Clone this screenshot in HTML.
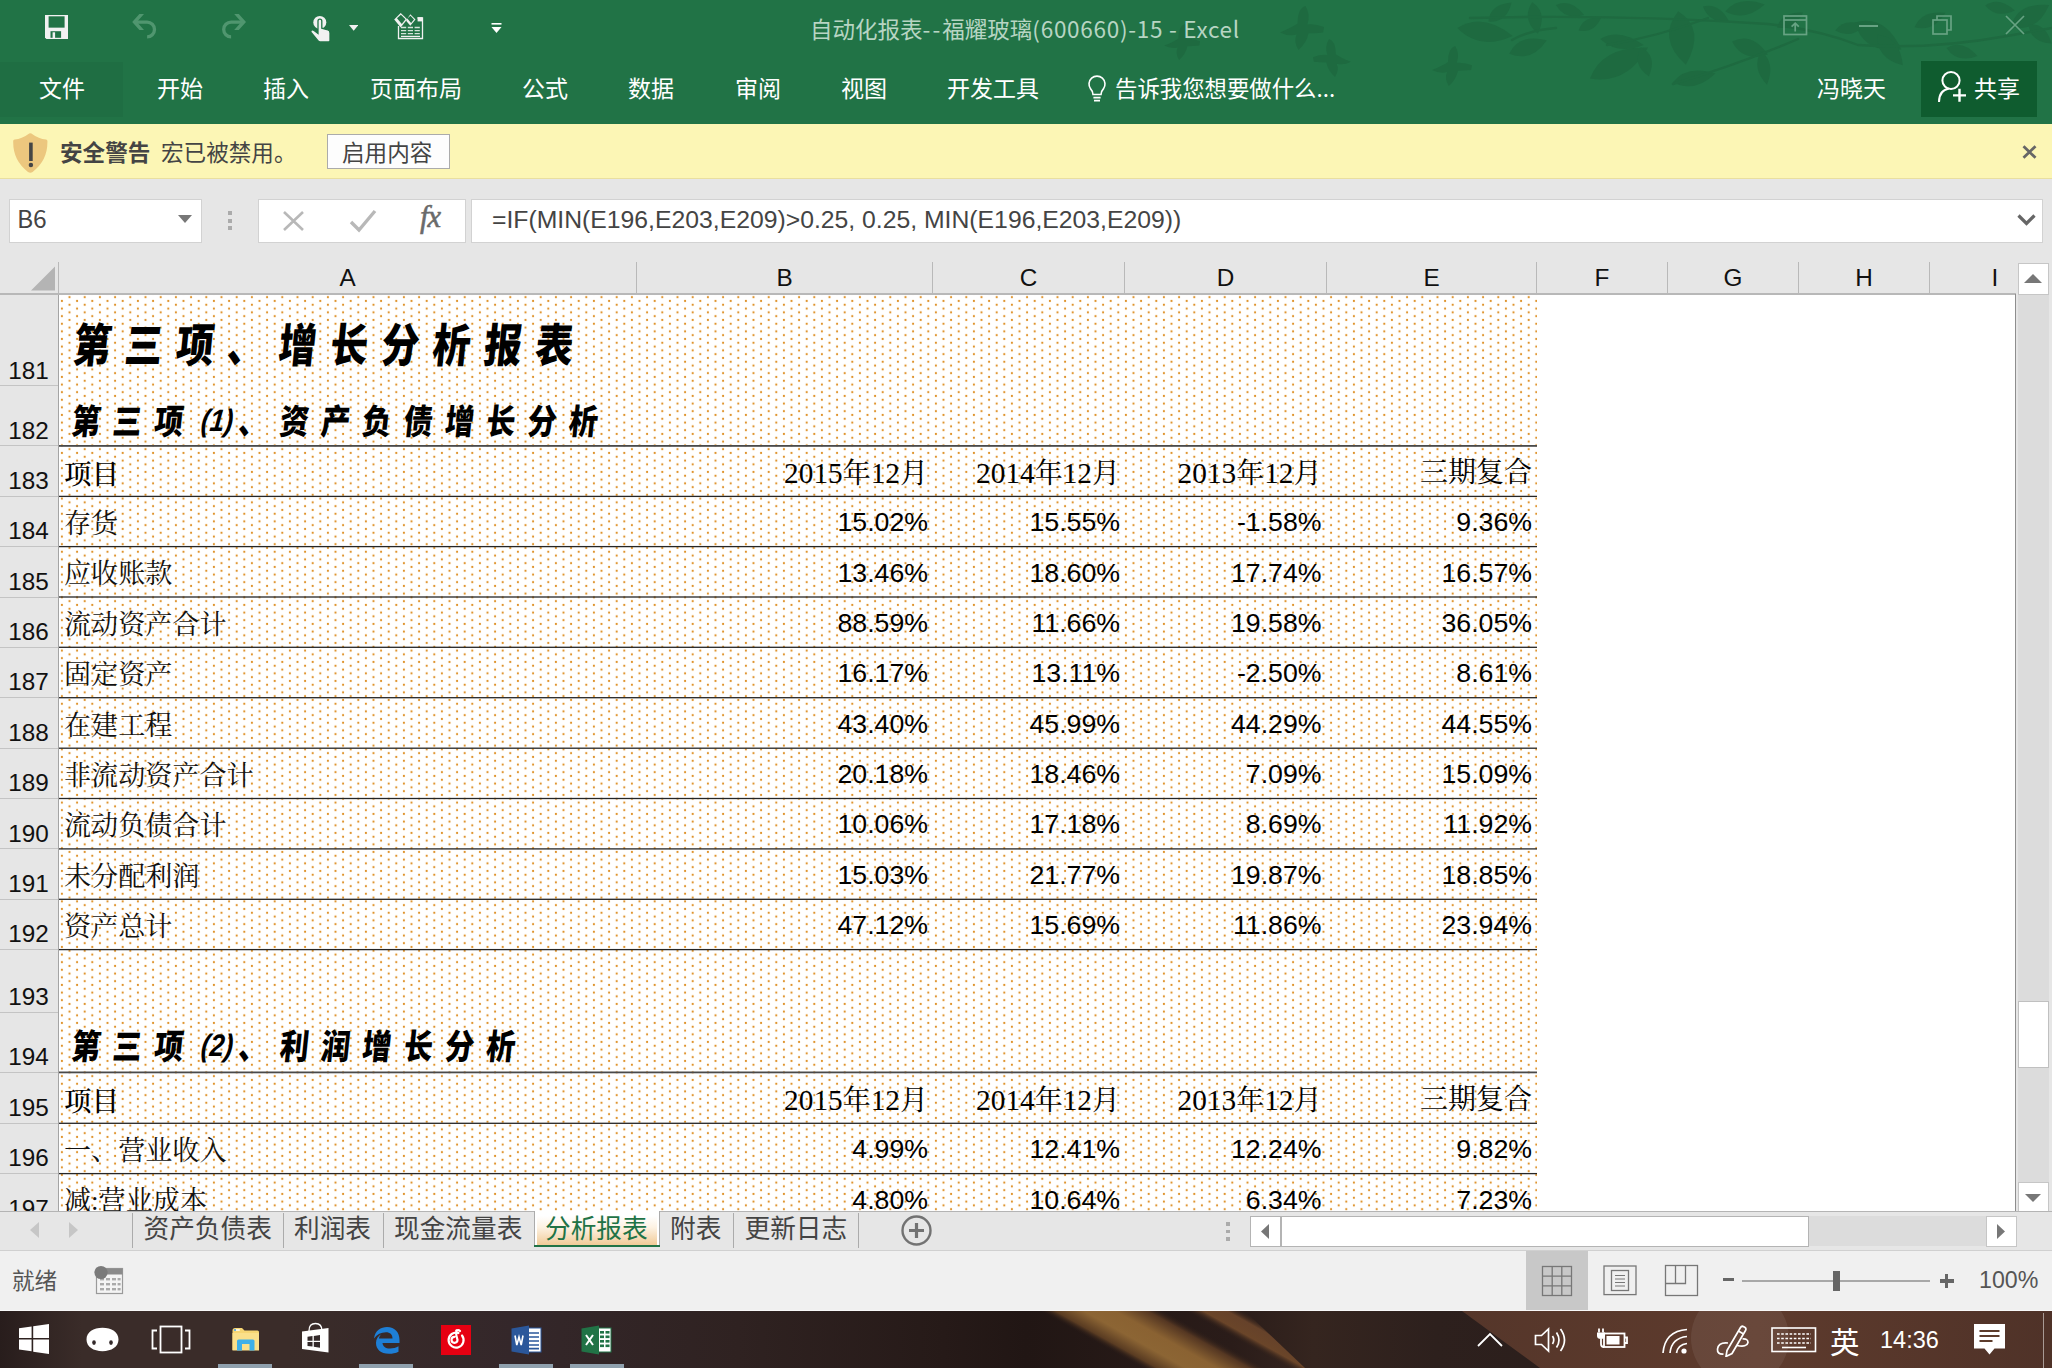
<!DOCTYPE html><html lang="zh-CN"><head><meta charset="utf-8"><title>Excel</title><style>
*{box-sizing:border-box;margin:0;padding:0}
html,body{width:2052px;height:1368px;overflow:hidden;background:#e6e6e6}
body{position:relative;font-family:"Liberation Sans","Noto Sans CJK SC",sans-serif;color:#000}
.abs{position:absolute}
.ui{font-family:"Noto Sans CJK SC","Liberation Sans",sans-serif}
.t{position:absolute;white-space:nowrap;line-height:1}
#green{left:0;top:0;width:2052px;height:124px;background:#217346;overflow:hidden}
.tab{position:absolute;top:72px;font-size:23px;line-height:30px;color:#fff;white-space:nowrap;font-family:"Noto Sans CJK SC","Liberation Sans",sans-serif}
#warn{left:0;top:124px;width:2052px;height:55px;background:#fcf6b5;border-bottom:1px solid #e9dfa0}
#fbar{left:0;top:179px;width:2052px;height:83px;background:#e6e6e6}
.box{position:absolute;top:199px;height:44px;background:#fff;border:1px solid #d2d2d2}
#colhdr{left:0;top:262px;width:2052px;height:32px;background:#e6e6e6}
.ch{position:absolute;top:264.4px;font-size:24.3px;line-height:28px;width:60px;margin-left:-30px;text-align:center;color:#111}
.cs{position:absolute;top:262px;width:1px;height:31px;background:#b9b9b9}
.rn{position:absolute;left:0;width:58px;text-align:center;font-size:24.3px;line-height:28px;color:#111;padding-right:1px}
.rl{position:absolute;left:0;width:58px;height:1px;background:#c4c4c4}
.hl{position:absolute;left:58px;width:1479px;height:1.4px;background:#2b2b2b}
.cn{position:absolute;left:64px;font-family:"Liberation Serif","Noto Serif CJK SC",serif;font-weight:400;font-size:27.1px;line-height:30px;white-space:nowrap;color:#111}
.hd{position:absolute;font-family:"Liberation Serif","Noto Serif CJK SC",serif;font-weight:400;font-size:28px;line-height:32px;white-space:nowrap;color:#000;text-align:right}
.dg{font-size:29.3px}
.num{position:absolute;font-size:26.7px;line-height:30px;white-space:nowrap;text-align:right;color:#000}
.brush{position:absolute;font-family:"Noto Sans CJK SC","Liberation Sans",sans-serif;font-weight:900;white-space:nowrap;color:#000}
#tabs{left:0;top:1211px;width:2052px;height:40px;background:#e6e6e6;border-bottom:1px solid #d0d0d0}
.st{position:absolute;top:1210.4px;font-size:25.7px;line-height:34px;color:#444;white-space:nowrap;font-family:"Noto Sans CJK SC","Liberation Sans",sans-serif}
.ss{position:absolute;top:1213px;width:1px;height:35px;background:#ababab}
#status{left:0;top:1251px;width:2052px;height:60px;background:#f0f0f0}
#task{left:0;top:1311px;width:2052px;height:57px;background:#33292a;overflow:hidden}
</style></head><body><div id="green" class="abs">
<div class="abs" style="left:0;top:62px;width:123px;height:55px;background:#1f6e43"></div>
<svg class="abs" style="left:0;top:0" width="2052" height="124" viewBox="0 0 2052 124"><g fill="#1e6a40"><path d="M1457.3 28.1Q1482.2 11.9 1512.7 35.9Q1479.5 51.0 1457.3 28.1z"/><path d="M1509.2 53.8Q1518.7 33.2 1546.8 40.2Q1531.6 62.8 1509.2 53.8z"/><path d="M1532.2 2.2Q1548.0 12.5 1537.8 33.8Q1521.1 18.8 1532.2 2.2z"/><path d="M1488.5 21.6Q1489.6 4.2 1511.5 2.4Q1507.0 22.7 1488.5 21.6z"/><path d="M1589.9 78.5Q1602.4 45.8 1648.1 47.5Q1626.9 84.9 1589.9 78.5z"/><path d="M1600.2 38.9Q1619.6 27.7 1643.8 45.1Q1617.9 55.4 1600.2 38.9z"/><path d="M1641.1 47.5Q1657.6 55.5 1648.9 76.5Q1631.3 64.1 1641.1 47.5z"/><path d="M1678.2 11.3Q1706.3 29.1 1685.8 64.7Q1656.6 38.8 1678.2 11.3z"/><path d="M1672.5 82.6Q1686.6 64.3 1715.5 73.4Q1695.0 93.1 1672.5 82.6z"/><path d="M1732.1 41.5Q1751.9 31.6 1767.9 54.5Q1742.7 62.5 1732.1 41.5z"/><path d="M1761.0 51.3Q1775.9 62.5 1767.0 84.7Q1751.2 68.5 1761.0 51.3z"/><path d="M1725.3 11.5Q1738.7 -4.9 1764.7 4.5Q1745.4 21.9 1725.3 11.5z"/><path d="M1703.0 6.5Q1719.2 2.5 1729.0 21.5Q1709.0 23.2 1703.0 6.5z"/><path d="M1777.0 27.5Q1781.7 11.5 1803.0 12.5Q1794.5 30.7 1777.0 27.5z"/><path d="M1854.6 22.5Q1884.8 13.4 1901.4 49.5Q1864.2 54.6 1854.6 22.5z"/><path d="M1877.1 34.7Q1899.8 36.6 1902.9 65.3Q1876.4 58.8 1877.1 34.7z"/><path d="M1835.2 30.6Q1845.0 17.2 1864.8 25.4Q1850.5 39.6 1835.2 30.6z"/><path d="M1946.5 47.9Q1962.2 39.0 1977.5 56.1Q1957.2 63.8 1946.5 47.9z"/><path d="M1914.6 27.2Q1921.6 10.0 1945.4 12.8Q1933.8 32.2 1914.6 27.2z"/><path d="M2010.9 27.0Q2017.0 2.3 2049.1 5.0Q2037.3 33.0 2010.9 27.0z"/><path d="M2028.5 24.4Q2045.8 22.4 2051.5 43.6Q2030.7 42.7 2028.5 24.4z"/><path d="M1985.2 5.4Q1999.0 -3.8 2014.8 10.6Q1996.5 19.1 1985.2 5.4z"/><path d="M1555.9 4.9Q1571.1 -1.8 1584.1 15.1Q1564.7 20.3 1555.9 4.9z"/><path d="M1578.7 30.5Q1582.6 16.3 1601.3 17.5Q1594.0 33.6 1578.7 30.5z"/><path d="M1164.0 45.6Q1174.8 41.3 1178.4 38.4Q1178.4 25.8 1184.9 24.0Q1189.2 31.2 1186.3 39.1Q1192.8 38.4 1200.0 41.3L1199.3 45.6Q1192.8 46.3 1187.4 46.3Q1185.6 54.6 1179.1 60.0Q1174.8 52.8 1177.7 47.4Q1171.2 49.2 1164.0 45.6z"/><path d="M1280.0 32.4Q1293.2 27.1 1297.6 23.6Q1297.6 8.2 1305.5 6.0Q1310.8 14.8 1307.3 24.5Q1315.2 23.6 1324.0 27.1L1323.1 32.4Q1315.2 33.3 1308.6 33.3Q1306.4 43.4 1298.5 50.0Q1293.2 41.2 1296.7 34.6Q1288.8 36.8 1280.0 32.4z"/><path d="M1351.0 61.8Q1339.6 57.2 1335.8 54.2Q1335.8 40.9 1329.0 39.0Q1324.4 46.6 1327.4 55.0Q1320.6 54.2 1313.0 57.2L1313.8 61.8Q1320.6 62.6 1326.3 62.6Q1328.2 71.3 1335.0 77.0Q1339.6 69.4 1336.6 63.7Q1343.4 65.6 1351.0 61.8z"/><path d="M1432.0 70.0Q1444.0 65.2 1448.0 62.0Q1448.0 48.0 1455.2 46.0Q1460.0 54.0 1456.8 62.8Q1464.0 62.0 1472.0 65.2L1471.2 70.0Q1464.0 70.8 1458.0 70.8Q1456.0 80.0 1448.8 86.0Q1444.0 78.0 1447.2 72.0Q1440.0 74.0 1432.0 70.0z"/></g><g fill="none" stroke="#1e6a40" stroke-width="2.4" stroke-linecap="round"><path d="M1470 18Q1620 14 1768 24Q1820 30 1858 45Q1930 50 2007 36L2052 28"/><path d="M1607 45Q1660 36 1708 18"/><path d="M1673 84Q1740 64 1798 39"/><path d="M1512 40Q1530 30 1556 28"/></g></svg>
<svg class="abs" style="left:44.8px;top:15px" width="23.6" height="23.9" viewBox="0 0 23.6 23.9">
<path d="M0 0h23.6v23.9h-22.2l-1.400 -1.400z" fill="#f1f1f1"/><rect x="3.6" y="1.300" width="16" height="11.350" fill="#217346"/>
<rect x="5.500" y="16.200" width="10.600" height="6.600" fill="#217346"/><rect x="7.600" y="17.300" width="2.500" height="6.600" fill="#f1f1f1"/></svg>
<svg class="abs" style="left:131px;top:13px" width="28" height="28" viewBox="0 0 28 28" fill="none" stroke="#50966f" stroke-width="3.300">
<path d="M1.200 9.100L8.400 1.100H13L5.900 9.100L13 17.100H8.400z" fill="#50966f" stroke="none"/><path d="M5 9.100H16.100A7.400 7.400 0 0 1 16.100 23.900"/></svg>
<svg class="abs" style="left:219px;top:13px" width="28" height="28" viewBox="0 0 28 28" fill="none" stroke="#50966f" stroke-width="3.300">
<path d="M27 9.100L19.800 1.100H15.200L22.300 9.100L15.200 17.100H19.800z" fill="#50966f" stroke="none"/><path d="M23.200 9.100H12.100A7.400 7.400 0 0 0 12.100 23.900"/></svg>
<svg class="abs" style="left:310px;top:15px" width="22" height="27" viewBox="0 0 22 27">
<circle cx="9.800" cy="7.400" r="6.500" fill="#f1f1f1"/>
<path d="M8 6 a1.900 1.900 0 0 1 3.800 0 v7.200 l6.200 1.800 q2 .6 2 3 v7.500 q0 1.400 -1.400 1.400 h-8.500 q-1.200 0 -2 -1 l-7 -8.600 q-.8 -1.400 .4 -2.200 q1.400 -.8 2.600 .4 l3.900 3z" fill="#f1f1f1" stroke="#217346" stroke-width="1.300"/></svg>
<svg class="abs" style="left:349px;top:25px" width="9.400" height="5.800" viewBox="0 0 10 6"><path d="M0 0h10l-5 6z" fill="#f1f1f1"/></svg>
<svg class="abs" style="left:393px;top:12px" width="32" height="28" viewBox="0 0 32 28">
<path d="M5.500 14v12.500h24v-20.500h-5" fill="none" stroke="#f1f1f1" stroke-width="1.300"/>
<g stroke="#d4e3da" stroke-width="1.300" stroke-dasharray="5.200 1.600"><path d="M8 15.500h19M8 18.600h19M8 21.600h19"/></g><path d="M8 24.400h19" stroke="#f1f1f1" stroke-width="1.200"/>
<path d="M7.700 1l6.500 6.300l-6.500 8.200l-6.500 -8z" fill="#f1f1f1"/>
<path d="M7.900 2.800l4.600 4.500l-3.700 4.600l-4.800 -5.600z" fill="#217346"/>
<path d="M17.300 2.200l5.200 5.200l-5.200 6.400l-4.200 -5z" fill="#f1f1f1"/>
<path d="M17.400 3.800l3.600 3.600l-2.900 3.600l-3.800 -4.400z" fill="#217346"/>
<rect x="24.600" y="5.200" width="4.900" height="4.200" fill="#f1f1f1"/></svg>
<svg class="abs" style="left:491px;top:23px" width="11" height="10" viewBox="0 0 11 10"><rect x="0.5" y="0" width="10" height="1.6" fill="#ffffff"/><path d="M0.5 4h10l-5 6z" fill="#ffffff"/></svg>
<div class="t ui" style="left:810px;top:13px;font-size:22.5px;line-height:30px;color:#b7d5c3">自动化报表<span style="letter-spacing:2.1px">--</span>福耀玻璃<span style="letter-spacing:.72px">(600660)-15 - Excel</span></div>
<svg class="abs" style="left:1783px;top:15px" width="25" height="21" viewBox="0 0 25 21" fill="none" stroke="#67a383" stroke-width="1.7">
<rect x="1" y="1" width="22.5" height="18.5"/><path d="M1 5h22"/><path d="M12.2 16.5v-8M8.6 11.6l3.6 -3.4l3.6 3.4"/></svg>
<div class="abs" style="left:1859px;top:25px;width:19px;height:1.6px;background:#67a383"></div>
<svg class="abs" style="left:1932px;top:15px" width="20" height="20" viewBox="0 0 20 20" fill="none" stroke="#67a383" stroke-width="1.7">
<rect x="1" y="5" width="14" height="14"/><path d="M5 5V1h14v14h-4"/></svg>
<svg class="abs" style="left:2005px;top:15px" width="20" height="20" viewBox="0 0 20 20" fill="none" stroke="#67a383" stroke-width="1.7">
<path d="M1 1l18 18M19 1L1 19"/></svg>
<div class="tab" style="left:39px">文件</div>
<div class="tab" style="left:157px">开始</div>
<div class="tab" style="left:263px">插入</div>
<div class="tab" style="left:370px">页面布局</div>
<div class="tab" style="left:522px">公式</div>
<div class="tab" style="left:628px">数据</div>
<div class="tab" style="left:735px">审阅</div>
<div class="tab" style="left:841px">视图</div>
<div class="tab" style="left:947px">开发工具</div>
<svg class="abs" style="left:1086px;top:74px" width="22" height="29" viewBox="0 0 22 29" fill="none" stroke="#fff" stroke-width="1.6">
<path d="M7 20.5 q0 -3 -2.4 -5.6 a8 8 0 1 1 12.8 0 q-2.4 2.6 -2.4 5.6z"/><path d="M7.4 23.6h7.2M8 26.6h6"/></svg>
<div class="tab" style="left:1115px;font-size:22.4px">告诉我您想要做什么...</div>
<div class="tab" style="left:1817px">冯晓天</div>
<div class="abs" style="left:1921px;top:61px;width:116px;height:56px;background:#0f5c2f"></div>
<svg class="abs" style="left:1937px;top:70px" width="30" height="33" viewBox="0 0 30 33" fill="none" stroke="#fff" stroke-width="2">
<circle cx="14" cy="10.5" r="8.6"/><path d="M2 32 q0 -11.5 10 -13.4"/><path d="M16 25.4h13M22.5 18.8v13" stroke-width="2.4"/></svg>
<div class="tab" style="left:1974px">共享</div>
</div>
<div id="warn" class="abs"></div>
<svg class="abs" style="left:13px;top:133px" width="35" height="40" viewBox="0 0 35 40">
<path d="M17.300 0.300 q1.200 0 2.200 .9 q6 4.600 13.500 5.300 q1.400 .2 1.400 1.600 q.4 19.500 -14.800 30.800 q-2.300 1.500 -4.600 0 q-15.200 -11.300 -14.800 -30.800 q0 -1.400 1.400 -1.600 q7.500 -.7 13.500 -5.300 q1 -.9 2.200 -.9z" fill="#ecc77e"/>
<rect x="16.100" y="9.600" width="3.600" height="18.400" fill="#454545"/><circle cx="17.900" cy="32.100" r="2.250" fill="#454545"/></svg>
<div class="t ui" style="left:60px;top:136.500px;font-size:22.6px;line-height:30px;font-weight:700;color:#444">安全警告</div>
<div class="t ui" style="left:161px;top:137px;font-size:22.6px;line-height:30px;color:#444">宏已被禁用。</div>
<div class="abs" style="left:327px;top:134px;width:123px;height:35px;background:#fdfdfd;border:1px solid #ababab"></div>
<div class="t ui" style="left:342px;top:137px;font-size:22.6px;line-height:30px;color:#444">启用内容</div>
<svg class="abs" style="left:2022px;top:145px" width="15" height="14" viewBox="0 0 15 14" stroke="#666" stroke-width="2.8" fill="none"><path d="M1.5 1.2l12 11.6M13.5 1.2l-12 11.6"/></svg>
<div id="fbar" class="abs"></div>
<div class="box" style="left:9px;width:192.500px"></div>
<div class="t ui" style="left:17px;top:203px;font-size:24.500px;line-height:30px;color:#444">B6</div>
<svg class="abs" style="left:178px;top:215px" width="14" height="8" viewBox="0 0 14 8"><path d="M0 0h14l-7 8z" fill="#777"/></svg>
<div class="abs" style="left:228px;top:211px;width:4px;height:4px;background:#ababab"></div>
<div class="abs" style="left:228px;top:218.5px;width:4px;height:4px;background:#ababab"></div>
<div class="abs" style="left:228px;top:226px;width:4px;height:4px;background:#ababab"></div>
<div class="box" style="left:258px;width:207.5px"></div>
<svg class="abs" style="left:282px;top:210px" width="24" height="22" viewBox="0 0 24 22" stroke="#b8b8b8" stroke-width="2.6" fill="none"><path d="M2 2l19 18M21 2L2 20"/></svg>
<svg class="abs" style="left:349px;top:209px" width="28" height="24" viewBox="0 0 28 24" stroke="#b8b8b8" stroke-width="3.4" fill="none"><path d="M2 13l8 8L26 2"/></svg>
<div class="t" style="left:420px;top:199px;font-family:'Liberation Serif',serif;font-style:italic;font-weight:400;-webkit-text-stroke:.55px #6a6a6a;font-size:30.500px;line-height:36px;color:#6a6a6a;letter-spacing:-1px">fx</div>
<div class="box" style="left:471px;width:1571.5px"></div>
<div class="t" style="left:492px;top:205px;font-size:24.75px;line-height:30px;color:#444">=IF(MIN(E196,E203,E209)&gt;0.25, 0.25, MIN(E196,E203,E209))</div>
<svg class="abs" style="left:2017px;top:214px" width="19" height="12" viewBox="0 0 19 12" stroke="#666" stroke-width="3.2" fill="none"><path d="M1.5 1.5l8 8l8 -8"/></svg>
<div id="colhdr" class="abs"></div>
<svg class="abs" style="left:30px;top:266px" width="26" height="25" viewBox="0 0 26 25"><path d="M25 0.5v24H1z" fill="#b4b4b4"/></svg>
<div class="cs" style="left:57.5px"></div>
<div class="cs" style="left:635.5px"></div>
<div class="cs" style="left:932.0px"></div>
<div class="cs" style="left:1124.0px"></div>
<div class="cs" style="left:1325.5px"></div>
<div class="cs" style="left:1536.0px"></div>
<div class="cs" style="left:1667.0px"></div>
<div class="cs" style="left:1798.0px"></div>
<div class="cs" style="left:1929.0px"></div>
<div class="ch" style="left:347.5px">A</div>
<div class="ch" style="left:784.5px">B</div>
<div class="ch" style="left:1028.5px">C</div>
<div class="ch" style="left:1225.5px">D</div>
<div class="ch" style="left:1431.5px">E</div>
<div class="ch" style="left:1602px">F</div>
<div class="ch" style="left:1733px">G</div>
<div class="ch" style="left:1864px">H</div>
<div class="ch" style="left:1995px">I</div>
<div class="abs" style="left:0;top:293.2px;width:2016px;height:1.5px;background:#b8b8b8"></div><div class="abs" style="left:58.5px;top:294.5px;width:1956.5px;height:916.5px;background:#fff"></div>
<svg class="abs" style="left:0;top:0" width="2052" height="1368" viewBox="0 0 2052 1368">
<defs><pattern id="dp" x="61.9" y="301.0" width="15.2" height="7.6" patternUnits="userSpaceOnUse">
<circle cx="0" cy="0" r="1.1" fill="#dd8f24"/><circle cx="15.2" cy="0" r="1.1" fill="#dd8f24"/>
<circle cx="0" cy="7.6" r="1.1" fill="#dd8f24"/><circle cx="15.2" cy="7.6" r="1.1" fill="#dd8f24"/>
<circle cx="7.6" cy="3.8" r="1.1" fill="#dd8f24"/></pattern></defs>
<rect x="58.5" y="295.0" width="1478.5" height="916.0" fill="url(#dp)"/>
</svg>
<div class="abs" style="left:0;top:294.5px;width:59px;height:916.5px;background:#e6e6e6;border-right:1px solid #a4a4a4;overflow:hidden"></div>
<div class="abs" style="left:0;top:294px;width:2052px;height:917px;overflow:hidden">
<div class="rn" style="top:62.5px">181</div>
<div class="rl" style="top:91.3px"></div>
<div class="rn" style="top:122.6px">182</div>
<div class="rl" style="top:151.4px"></div>
<div class="rn" style="top:173.1px">183</div>
<div class="rl" style="top:201.9px"></div>
<div class="rn" style="top:223.3px">184</div>
<div class="rl" style="top:252.1px"></div>
<div class="rn" style="top:273.7px">185</div>
<div class="rl" style="top:302.5px"></div>
<div class="rn" style="top:324.0px">186</div>
<div class="rl" style="top:352.8px"></div>
<div class="rn" style="top:374.4px">187</div>
<div class="rl" style="top:403.2px"></div>
<div class="rn" style="top:424.9px">188</div>
<div class="rl" style="top:453.7px"></div>
<div class="rn" style="top:475.2px">189</div>
<div class="rl" style="top:504.0px"></div>
<div class="rn" style="top:525.6px">190</div>
<div class="rl" style="top:554.4px"></div>
<div class="rn" style="top:576.0px">191</div>
<div class="rl" style="top:604.8px"></div>
<div class="rn" style="top:626.3px">192</div>
<div class="rl" style="top:655.1px"></div>
<div class="rn" style="top:689.3px">193</div>
<div class="rl" style="top:718.1px"></div>
<div class="rn" style="top:749.1px">194</div>
<div class="rl" style="top:777.9px"></div>
<div class="rn" style="top:800.0px">195</div>
<div class="rl" style="top:828.8px"></div>
<div class="rn" style="top:850.3px">196</div>
<div class="rl" style="top:879.1px"></div>
<div class="rn" style="top:900.7px">197</div>
<div class="rl" style="top:929.5px"></div>
<svg class="abs" style="left:0;top:0" width="2052" height="917" viewBox="0 0 2052 917"><rect x="59" y="151.00" width="1478" height="1.8" fill="#4a4a4a"/><rect x="59" y="201.75" width="1478" height="1.3" fill="#262626"/><rect x="59" y="251.95" width="1478" height="1.3" fill="#262626"/><rect x="59" y="302.35" width="1478" height="1.3" fill="#262626"/><rect x="59" y="352.65" width="1478" height="1.3" fill="#262626"/><rect x="59" y="403.05" width="1478" height="1.3" fill="#262626"/><rect x="59" y="453.55" width="1478" height="1.3" fill="#262626"/><rect x="59" y="503.85" width="1478" height="1.3" fill="#262626"/><rect x="59" y="554.25" width="1478" height="1.3" fill="#262626"/><rect x="59" y="604.65" width="1478" height="1.3" fill="#262626"/><rect x="59" y="654.95" width="1478" height="1.3" fill="#262626"/><rect x="59" y="777.50" width="1478" height="1.8" fill="#4a4a4a"/><rect x="59" y="828.65" width="1478" height="1.3" fill="#262626"/><rect x="59" y="878.95" width="1478" height="1.3" fill="#262626"/></svg>
<div class="brush" style="left:74.1px;top:20.9px;font-size:46px;line-height:55.2px;height:55.2px;letter-spacing:16.6px;transform-origin:0 50%;transform:scaleX(0.82) skewX(-7deg)">第三项、增长分析报表</div>
<div class="brush" style="left:72.1px;top:105.3px;font-size:34.5px;line-height:41.4px;height:41.4px;letter-spacing:14.67px;transform-origin:0 50%;transform:scaleX(0.84) skewX(-7deg)">第三项<span style="display:inline-block;width:51.2px;text-align:center;letter-spacing:0;line-height:0;position:relative;top:-3px;font-family:'Liberation Sans',sans-serif;font-weight:700;font-style:italic;font-size:31px">(1)</span>、资产负债增长分析</div>
<div class="brush" style="left:72.1px;top:729.8px;font-size:34.5px;line-height:41.4px;height:41.4px;letter-spacing:14.67px;transform-origin:0 50%;transform:scaleX(0.84) skewX(-7deg)">第三项<span style="display:inline-block;width:51.2px;text-align:center;letter-spacing:0;line-height:0;position:relative;top:-3px;font-family:'Liberation Sans',sans-serif;font-weight:700;font-style:italic;font-size:31px">(2)</span>、利润增长分析</div>
<div class="cn" style="top:165.9px;font-weight:500;font-size:27.5px;color:#000">项目</div>
<div class="hd" style="left:628.0px;width:300px;top:162.9px"><span class="dg">2015</span>年<span class="dg">12</span>月</div>
<div class="hd" style="left:820.0px;width:300px;top:162.9px"><span class="dg">2014</span>年<span class="dg">12</span>月</div>
<div class="hd" style="left:1021.5px;width:300px;top:162.9px"><span class="dg">2013</span>年<span class="dg">12</span>月</div>
<div class="hd" style="left:1232.0px;width:300px;top:162.9px">三期复合</div>
<div class="cn" style="top:792.8px;font-weight:500;font-size:27.5px;color:#000">项目</div>
<div class="hd" style="left:628.0px;width:300px;top:789.8px"><span class="dg">2015</span>年<span class="dg">12</span>月</div>
<div class="hd" style="left:820.0px;width:300px;top:789.8px"><span class="dg">2014</span>年<span class="dg">12</span>月</div>
<div class="hd" style="left:1021.5px;width:300px;top:789.8px"><span class="dg">2013</span>年<span class="dg">12</span>月</div>
<div class="hd" style="left:1232.0px;width:300px;top:789.8px">三期复合</div>
<div class="cn" style="top:215.0px">存货</div>
<div class="num" style="left:628.0px;width:300px;top:213.1px">15.02%</div>
<div class="num" style="left:820.0px;width:300px;top:213.1px">15.55%</div>
<div class="num" style="left:1021.5px;width:300px;top:213.1px">-1.58%</div>
<div class="num" style="left:1232.0px;width:300px;top:213.1px">9.36%</div>
<div class="cn" style="top:265.4px">应收账款</div>
<div class="num" style="left:628.0px;width:300px;top:263.5px">13.46%</div>
<div class="num" style="left:820.0px;width:300px;top:263.5px">18.60%</div>
<div class="num" style="left:1021.5px;width:300px;top:263.5px">17.74%</div>
<div class="num" style="left:1232.0px;width:300px;top:263.5px">16.57%</div>
<div class="cn" style="top:315.7px">流动资产合计</div>
<div class="num" style="left:628.0px;width:300px;top:313.8px">88.59%</div>
<div class="num" style="left:820.0px;width:300px;top:313.8px">11.66%</div>
<div class="num" style="left:1021.5px;width:300px;top:313.8px">19.58%</div>
<div class="num" style="left:1232.0px;width:300px;top:313.8px">36.05%</div>
<div class="cn" style="top:366.1px">固定资产</div>
<div class="num" style="left:628.0px;width:300px;top:364.2px">16.17%</div>
<div class="num" style="left:820.0px;width:300px;top:364.2px">13.11%</div>
<div class="num" style="left:1021.5px;width:300px;top:364.2px">-2.50%</div>
<div class="num" style="left:1232.0px;width:300px;top:364.2px">8.61%</div>
<div class="cn" style="top:416.6px">在建工程</div>
<div class="num" style="left:628.0px;width:300px;top:414.7px">43.40%</div>
<div class="num" style="left:820.0px;width:300px;top:414.7px">45.99%</div>
<div class="num" style="left:1021.5px;width:300px;top:414.7px">44.29%</div>
<div class="num" style="left:1232.0px;width:300px;top:414.7px">44.55%</div>
<div class="cn" style="top:466.9px">非流动资产合计</div>
<div class="num" style="left:628.0px;width:300px;top:465.0px">20.18%</div>
<div class="num" style="left:820.0px;width:300px;top:465.0px">18.46%</div>
<div class="num" style="left:1021.5px;width:300px;top:465.0px">7.09%</div>
<div class="num" style="left:1232.0px;width:300px;top:465.0px">15.09%</div>
<div class="cn" style="top:517.3px">流动负债合计</div>
<div class="num" style="left:628.0px;width:300px;top:515.4px">10.06%</div>
<div class="num" style="left:820.0px;width:300px;top:515.4px">17.18%</div>
<div class="num" style="left:1021.5px;width:300px;top:515.4px">8.69%</div>
<div class="num" style="left:1232.0px;width:300px;top:515.4px">11.92%</div>
<div class="cn" style="top:567.7px">未分配利润</div>
<div class="num" style="left:628.0px;width:300px;top:565.8px">15.03%</div>
<div class="num" style="left:820.0px;width:300px;top:565.8px">21.77%</div>
<div class="num" style="left:1021.5px;width:300px;top:565.8px">19.87%</div>
<div class="num" style="left:1232.0px;width:300px;top:565.8px">18.85%</div>
<div class="cn" style="top:618.0px">资产总计</div>
<div class="num" style="left:628.0px;width:300px;top:616.1px">47.12%</div>
<div class="num" style="left:820.0px;width:300px;top:616.1px">15.69%</div>
<div class="num" style="left:1021.5px;width:300px;top:616.1px">11.86%</div>
<div class="num" style="left:1232.0px;width:300px;top:616.1px">23.94%</div>
<div class="cn" style="top:842.0px">一、营业收入</div>
<div class="num" style="left:628.0px;width:300px;top:840.1px">4.99%</div>
<div class="num" style="left:820.0px;width:300px;top:840.1px">12.41%</div>
<div class="num" style="left:1021.5px;width:300px;top:840.1px">12.24%</div>
<div class="num" style="left:1232.0px;width:300px;top:840.1px">9.82%</div>
<div class="cn" style="top:892.4px">减:营业成本</div>
<div class="num" style="left:628.0px;width:300px;top:890.5px">4.80%</div>
<div class="num" style="left:820.0px;width:300px;top:890.5px">10.64%</div>
<div class="num" style="left:1021.5px;width:300px;top:890.5px">6.34%</div>
<div class="num" style="left:1232.0px;width:300px;top:890.5px">7.23%</div>
</div><div class="abs" style="left:2015px;top:294px;width:1px;height:917px;background:#8e8e8e"></div>
<div class="abs" style="left:2016px;top:262px;width:36px;height:949px;background:#e6e6e6"></div>
<div class="abs" style="left:2018px;top:294px;width:31px;height:889px;background:#dcdcdc"></div>
<div class="abs" style="left:2018px;top:263px;width:31px;height:31.5px;background:#fff;border:1px solid #c6c6c6"></div>
<svg class="abs" style="left:2024px;top:274px" width="18" height="9" viewBox="0 0 18 9"><path d="M0 9h18l-9 -9z" fill="#777"/></svg>
<div class="abs" style="left:2018px;top:1001px;width:31px;height:67px;background:#fff;border:1px solid #c0c0c0"></div>
<div class="abs" style="left:2018px;top:1182px;width:31px;height:29px;background:#fff;border:1px solid #c6c6c6;border-bottom:none"></div>
<svg class="abs" style="left:2025px;top:1194px" width="16" height="8" viewBox="0 0 16 8"><path d="M0 0h16l-8 8z" fill="#777"/></svg>
<div class="abs" style="left:0;top:1211px;width:2052px;height:1.4px;background:#b4b4b4"></div>
<div id="tabs" class="abs"></div>
<div class="abs" style="left:0;top:1211px;width:2052px;height:1.4px;background:#b4b4b4"></div>
<svg class="abs" style="left:30px;top:1222px" width="9" height="16" viewBox="0 0 9 16"><path d="M9 0v16l-9 -8z" fill="#c6c6c6"/></svg>
<svg class="abs" style="left:69px;top:1222px" width="9" height="16" viewBox="0 0 9 16"><path d="M0 0v16l9 -8z" fill="#c6c6c6"/></svg>
<div class="abs" style="left:534px;top:1210.600px;width:126px;height:34.800px;background:linear-gradient(#fff 0,#fff 14%,#fdf2e3 48%,#f1cb98 100%);border-left:1px solid #ababab;border-right:1px solid #ababab;box-shadow:inset 2px 0 0 #fff,inset -2px 0 0 #fff"></div>
<div class="abs" style="left:534px;top:1245px;width:126px;height:2.200px;background:#217346"></div>
<div class="ss" style="left:132.0px"></div>
<div class="ss" style="left:283.0px"></div>
<div class="ss" style="left:383.0px"></div>
<div class="ss" style="left:733.0px"></div>
<div class="ss" style="left:857.5px"></div>
<div class="st" style="left:143.5px;color:#444">资产负债表</div>
<div class="st" style="left:294px;color:#444">利润表</div>
<div class="st" style="left:394px;color:#444">现金流量表</div>
<div class="st" style="left:545px;color:#217346">分析报表</div>
<div class="st" style="left:670px;color:#444">附表</div>
<div class="st" style="left:744.5px;color:#444">更新日志</div>
<svg class="abs" style="left:900px;top:1214px" width="33" height="33" viewBox="0 0 33 33" fill="none" stroke="#727272" stroke-width="2.4"><circle cx="16.5" cy="16.5" r="14"/><path d="M16.5 9v15M9 16.5h15" stroke-width="3.2"/></svg>
<div class="abs" style="left:1226px;top:1222px;width:4px;height:3.6px;background:#ababab"></div>
<div class="abs" style="left:1226px;top:1229.5px;width:4px;height:3.6px;background:#ababab"></div>
<div class="abs" style="left:1226px;top:1237px;width:4px;height:3.6px;background:#ababab"></div>
<div class="abs" style="left:1250px;top:1216px;width:766px;height:30px;background:#dcdcdc"></div>
<div class="abs" style="left:1249.5px;top:1215.5px;width:31.5px;height:31px;background:#fff;border:1px solid #b4b4b4"></div>
<svg class="abs" style="left:1260.5px;top:1224px" width="8" height="15" viewBox="0 0 8 15"><path d="M8 0v15l-8 -7.5z" fill="#777"/></svg>
<div class="abs" style="left:1280.5px;top:1215.5px;width:528.5px;height:31px;background:#fff;border:1px solid #b4b4b4"></div>
<div class="abs" style="left:1985.5px;top:1215.5px;width:31px;height:31px;background:#fff;border:1px solid #c6c6c6"></div>
<svg class="abs" style="left:1996.5px;top:1224px" width="8" height="15" viewBox="0 0 8 15"><path d="M0 0v15l8 -7.5z" fill="#777"/></svg>
<div id="status" class="abs"></div>
<div class="t ui" style="left:12px;top:1265px;font-size:22.6px;line-height:30px;color:#555">就绪</div>
<svg class="abs" style="left:93px;top:1265px" width="32" height="32" viewBox="0 0 32 32">
<rect x="3.5" y="3.5" width="26" height="25" fill="#f4f4f4" stroke="#9a9a9a" stroke-width="1.2"/>
<rect x="3.5" y="3.5" width="26" height="6" fill="#8a8a8a"/>
<g fill="#aaaaaa"><rect x="7" y="13" width="4" height="2.4"/><rect x="13" y="13" width="4" height="2.4"/><rect x="19" y="13" width="4" height="2.4"/><rect x="24.6" y="13" width="3" height="2.4"/>
<rect x="7" y="18" width="4" height="2.4"/><rect x="13" y="18" width="4" height="2.4"/><rect x="19" y="18" width="4" height="2.4"/><rect x="24.6" y="18" width="3" height="2.4"/>
<rect x="7" y="23" width="4" height="2.4"/><rect x="13" y="23" width="4" height="2.4"/><rect x="19" y="23" width="4" height="2.4"/><rect x="24.6" y="23" width="3" height="2.4"/></g>
<circle cx="8" cy="7.5" r="6.6" fill="#7a7a7a"/></svg>
<div class="abs" style="left:1526px;top:1251px;width:62px;height:60px;background:#c8c8c8"></div>
<svg class="abs" style="left:1541px;top:1265px" width="32" height="32" viewBox="0 0 32 32" fill="none" stroke="#777" stroke-width="1.3">
<rect x="1.5" y="1.5" width="29" height="29"/><path d="M11.2 1.5v29M20.8 1.5v29M1.5 11.2h29M1.5 20.8h29"/></svg>
<svg class="abs" style="left:1603px;top:1265px" width="34" height="31" viewBox="0 0 34 31" fill="none" stroke="#777" stroke-width="1.3">
<rect x="1" y="1" width="32" height="28.6"/><rect x="8.5" y="5.5" width="17" height="20"/><path d="M12 10.5h10M12 14h10M12 17.5h10M12 21h10" stroke-width="1.1"/></svg>
<svg class="abs" style="left:1664px;top:1264px" width="35" height="33" viewBox="0 0 35 33" fill="none" stroke="#777" stroke-width="1.3">
<rect x="1.5" y="1.5" width="32" height="30"/><path d="M1.5 19.5h20v-18M11.5 1.5v18"/></svg>
<div class="abs" style="left:1722.5px;top:1278px;width:11.5px;height:3.4px;background:#666"></div>
<div class="abs" style="left:1742px;top:1280.4px;width:188px;height:1.4px;background:#a8a8a8"></div>
<div class="abs" style="left:1833px;top:1270.5px;width:7px;height:20.5px;background:#666"></div>
<div class="abs" style="left:1939.5px;top:1279.4px;width:14.5px;height:3.2px;background:#666"></div><div class="abs" style="left:1945.2px;top:1273.6px;width:3.2px;height:14.6px;background:#666"></div>
<div class="t" style="left:1979px;top:1265px;font-size:23.200px;line-height:30px;color:#555">100%</div>
<div id="task" class="abs">
<svg class="abs" style="left:0;top:0" width="2052" height="57" viewBox="0 0 2052 57">
<defs><linearGradient id="tb0" x1="0" x2="1" y1="0" y2="0"><stop offset="0" stop-color="#281d1c"/><stop offset=".04" stop-color="#3a2c29"/><stop offset=".14" stop-color="#3a2c29"/><stop offset=".25" stop-color="#34272a"/><stop offset=".36" stop-color="#2f2221"/><stop offset=".46" stop-color="#261a18"/><stop offset=".5" stop-color="#211614"/><stop offset=".6" stop-color="#2a1c19"/><stop offset=".64" stop-color="#35251f"/><stop offset=".7" stop-color="#2d201d"/><stop offset="1" stop-color="#241917"/></linearGradient>
<linearGradient id="tb1" gradientUnits="userSpaceOnUse" x1="1040" y1="0" x2="1069.8" y2="-53.3"><stop offset="0" stop-color="#2a1c18" stop-opacity="0"/><stop offset=".12" stop-color="#5a3c22"/><stop offset=".35" stop-color="#8c6534"/><stop offset=".6" stop-color="#8a6232"/><stop offset=".86" stop-color="#553722"/><stop offset="1" stop-color="#2a1c18" stop-opacity="0"/></linearGradient>
<linearGradient id="tb3" gradientUnits="userSpaceOnUse" x1="1185" y1="0" x2="1199.3" y2="-25.6"><stop offset="0" stop-color="#2a1c18" stop-opacity="0"/><stop offset=".3" stop-color="#6a4529"/><stop offset=".7" stop-color="#66422a"/><stop offset="1" stop-color="#2a1c18" stop-opacity="0"/></linearGradient><linearGradient id="tb2" x1="0" x2="1" y1="0" y2="0"><stop offset="0" stop-color="#55362a"/><stop offset=".5" stop-color="#5e3b2d"/><stop offset="1" stop-color="#4f3228"/></linearGradient></defs>
<rect width="2052" height="57" fill="url(#tb0)"/>
<path d="M1040 0H1165L1268 57H1112z" fill="url(#tb1)"/><path d="M1185 0H1245L1305 57H1240z" fill="url(#tb3)"/>
<path d="M1462 0H2052V57H1540z" fill="url(#tb2)"/>
</svg>
<div class="abs" style="left:1691px;top:-22px;width:98px;height:98px;border-radius:50%;background:rgba(255,255,255,.07)"></div>
</div>
<div class="abs" style="left:0;top:1310px;width:2052px;height:1px;background:#f8f8f8"></div>
<svg class="abs" style="left:18px;top:1323px" width="32" height="32" viewBox="0 0 32 32" fill="#fff">
<path d="M1 5.2L13.6 3.4V15H1zM15.2 3.2L31 1v14H15.2zM1 16.6h12.6v11.6L1 26.4zM15.2 16.6H31V31l-15.8 -2.2z"/></svg>
<svg class="abs" style="left:86px;top:1327px" width="33" height="25" viewBox="0 0 33 25">
<path d="M16.5 .8 c9 0 16 4 16 11.8 c0 7.4 -7 11.6 -16 11.6 s-16 -4.2 -16 -11.6 c0 -7.800 7 -11.8 16 -11.8z" fill="#fff"/>
<ellipse cx="8" cy="15.600" rx="1.800" ry="2.300" fill="#33292a"/><ellipse cx="25" cy="15.600" rx="1.800" ry="2.300" fill="#33292a"/></svg>
<svg class="abs" style="left:151px;top:1325px" width="40" height="29" viewBox="0 0 40 29" fill="none" stroke="#fff" stroke-width="1.800">
<rect x="9.500" y="1.500" width="21" height="26"/><path d="M6 5.500H1.500v18H6M34 5.500h4.500v18H34"/></svg>
<svg class="abs" style="left:232px;top:1327px" width="28" height="25" viewBox="0 0 28 25">
<path d="M0.500 3.500 q0 -2.500 2.500 -2.500 h7 l2.500 2.500 h13 q1.500 0 1.500 1.500 v18 h-26.500z" fill="#f7d673"/>
<rect x="0.500" y="6" width="26.500" height="17.500" fill="#fbe08a"/>
<rect x="2" y="2.200" width="6" height="1.600" rx=".8" fill="#fff"/><circle cx="3" cy="3" r="1" fill="#3a9ad9"/>
<path d="M5 23.500v-9.500q0 -1.500 1.500 -1.500h14.500q1.500 0 1.500 1.500v9.500h-5v-6.500h-7.500v6.500z" fill="#3fb0e8"/>
</svg>
<div class="abs" style="left:218px;top:1364px;width:54px;height:4px;background:#8fa0ad"></div>
<svg class="abs" style="left:301px;top:1322px" width="29" height="32" viewBox="0 0 29 32">
<path d="M8 9 q0 -7.500 6.500 -7.500 q6.500 0 6.500 7.500" fill="none" stroke="#fff" stroke-width="1.300"/>
<path d="M1 9.500L27.500 6v24.500L1 27z" fill="#fff"/>
<g fill="#33292a"><path d="M6.500 14.800l5 -.7v4.700h-5zM12.800 13.900l6.200 -.9v5.800h-6.200zM6.500 20h5v4.600l-5 -.6zM12.800 20h6.200v5.700l-6.200 -.9z"/></g></svg>
<svg class="abs" style="left:373px;top:1326px" width="27" height="28" viewBox="0 0 27 28">
<path d="M1 12.500 C2 4.500 8 1 14 1 c8 0 12.500 5.500 12.500 13 v3 H9.500 c.3 3.500 3 5.500 7.500 5.500 c3 0 6 -.8 8.500 -2.200 v5.500 c-3 1.400 -6 2 -9.500 2 C7.500 27.800 3 23 3 17 c0 -4 2 -7 5.500 -9 c-1.500 1.200 -2.300 3 -2.600 4.500 h13.600 c0 -4 -2.500 -6.200 -6.500 -6.200 C8 6.300 4 8.500 1 12.500z" fill="#1e7fd6"/></svg>
<div class="abs" style="left:359px;top:1364px;width:54px;height:4px;background:#8fa0ad"></div>
<svg class="abs" style="left:441px;top:1325px" width="30" height="30" viewBox="0 0 30 30"><rect width="30" height="30" fill="#e60012"/>
<g fill="none" stroke="#fff" stroke-width="2.200" stroke-linecap="round"><path d="M17.500 8 a7.500 7.500 0 1 0 3.500 2.500"/><path d="M15.500 5.500 q-1 5 1 9.500 a3 3 0 1 1 -3 -3.200"/><path d="M15.500 5.500 q2 -1 3.500 .5"/></g></svg>
<svg class="abs" style="left:511px;top:1325px" width="31" height="30" viewBox="0 0 31 30">
<rect x="13" y="3" width="17" height="24" fill="#fff" stroke="#2b579a" stroke-width="1"/>
<g stroke="#2b579a" stroke-width="1.600"><path d="M18 8h10M18 12h10M18 16h10M18 20h10M18 23.600h10"/></g>
<path d="M0.500 3.500L18 0.500v29L0.500 26.500z" fill="#2b579a"/>
<path d="M4 10.500l1.800 9.500l2.200 -8l2.200 8l1.800 -9.500" fill="none" stroke="#fff" stroke-width="1.600"/></svg>
<div class="abs" style="left:499px;top:1364px;width:54px;height:4px;background:#8fa0ad"></div>
<svg class="abs" style="left:581px;top:1325px" width="31" height="30" viewBox="0 0 31 30">
<rect x="13" y="3" width="17" height="24" fill="#fff" stroke="#217346" stroke-width="1"/>
<g fill="#217346"><rect x="19" y="6" width="4" height="2.600"/><rect x="24.500" y="6" width="4" height="2.600"/><rect x="19" y="10.500" width="4" height="2.600"/><rect x="24.500" y="10.500" width="4" height="2.600"/><rect x="19" y="15" width="4" height="2.600"/><rect x="24.500" y="15" width="4" height="2.600"/><rect x="19" y="19.500" width="4" height="2.600"/><rect x="24.500" y="19.500" width="4" height="2.600"/></g>
<path d="M0.500 3.500L18 0.500v29L0.500 26.500z" fill="#217346"/>
<path d="M5 10l7 10M12 10l-7 10" fill="none" stroke="#fff" stroke-width="2"/></svg>
<div class="abs" style="left:570px;top:1364px;width:54px;height:4px;background:#8fa0ad"></div>
<svg class="abs" style="left:1477px;top:1332px" width="26" height="15" viewBox="0 0 26 15" fill="none" stroke="#fff" stroke-width="1.800"><path d="M1 14L13 2l12 12"/></svg>
<svg class="abs" style="left:1534px;top:1325px" width="34" height="30" viewBox="0 0 34 30" fill="none" stroke="#fff" stroke-width="1.700">
<path d="M1.500 10.500h6l7 -6.500v22l-7 -6.500h-6z"/><path d="M18.500 11 q2.500 4 0 8M22.500 7.500 q5 7.500 0 15M26.500 4 q8 11 0 22"/></svg>
<svg class="abs" style="left:1595px;top:1327px" width="33" height="24" viewBox="0 0 33 24" fill="none" stroke="#fff" stroke-width="1.800">
<rect x="9" y="6.500" width="20.500" height="13.500"/><path d="M29.500 10.500h2.500v5.500h-2.500"/><rect x="11.500" y="9" width="13" height="8.500" fill="#fff" stroke="none"/>
<path d="M4 1.500v4M8 1.500v4" /><path d="M2 5.500h8v3.500q0 3 -4 3t-4 -3z" fill="#fff" stroke="none"/><path d="M6 12v5q0 3 3 3"/></svg>
<svg class="abs" style="left:1661px;top:1328px" width="28" height="27" viewBox="0 0 28 27" fill="none" stroke="#fff" stroke-width="1.700">
<path d="M2 25 Q4 3 26 1.500"/><path d="M9 25 Q10.500 10 26 8.500"/><path d="M15.500 25 Q17 16.500 26 15.500"/><circle cx="23" cy="23" r="2.600" fill="#fff" stroke="none"/></svg>
<svg class="abs" style="left:1716px;top:1323px" width="34" height="34" viewBox="0 0 34 34" fill="none" stroke="#fff" stroke-width="1.700">
<path d="M11 27.500L24.500 4.500q1.200 -2 3.200 -.8l1 .6q2 1.200 .8 3.200L16 30.500l-6 3z"/><path d="M22.500 8l5 3"/><path d="M12 20 q-9.500 -1 -10.500 6 q-.5 5.500 6 5"/><path d="M21 22.500 q10 2 11 -3 q0 -4 -5.500 -3.500"/></svg>
<svg class="abs" style="left:1771px;top:1327px" width="46" height="26" viewBox="0 0 46 26" fill="none" stroke="#fff" stroke-width="1.600">
<rect x="1" y="1" width="43.500" height="23.500"/><path d="M6 7h34M6 11.500h34M6 16h34" stroke-dasharray="2.600 1.600"/><path d="M11 20.500h24"/></svg>
<div class="t ui" style="left:1830px;top:1322px;font-size:29.500px;line-height:36px;color:#fff">英</div>
<div class="t" style="left:1880px;top:1325px;font-size:23.500px;line-height:30px;color:#fff">14:36</div>
<svg class="abs" style="left:1973px;top:1323px" width="33" height="33" viewBox="0 0 33 33">
<path d="M1 1h31v24.500h-10.500l-5 6l-5 -6H1z" fill="#fff"/><g stroke="#5d3c2c" stroke-width="2"><path d="M6.500 8h20M6.500 13h20M6.500 18h13"/></g></svg>
<div class="abs" style="left:2043px;top:1313px;width:1.200px;height:55px;background:#a89a94"></div></body></html>
